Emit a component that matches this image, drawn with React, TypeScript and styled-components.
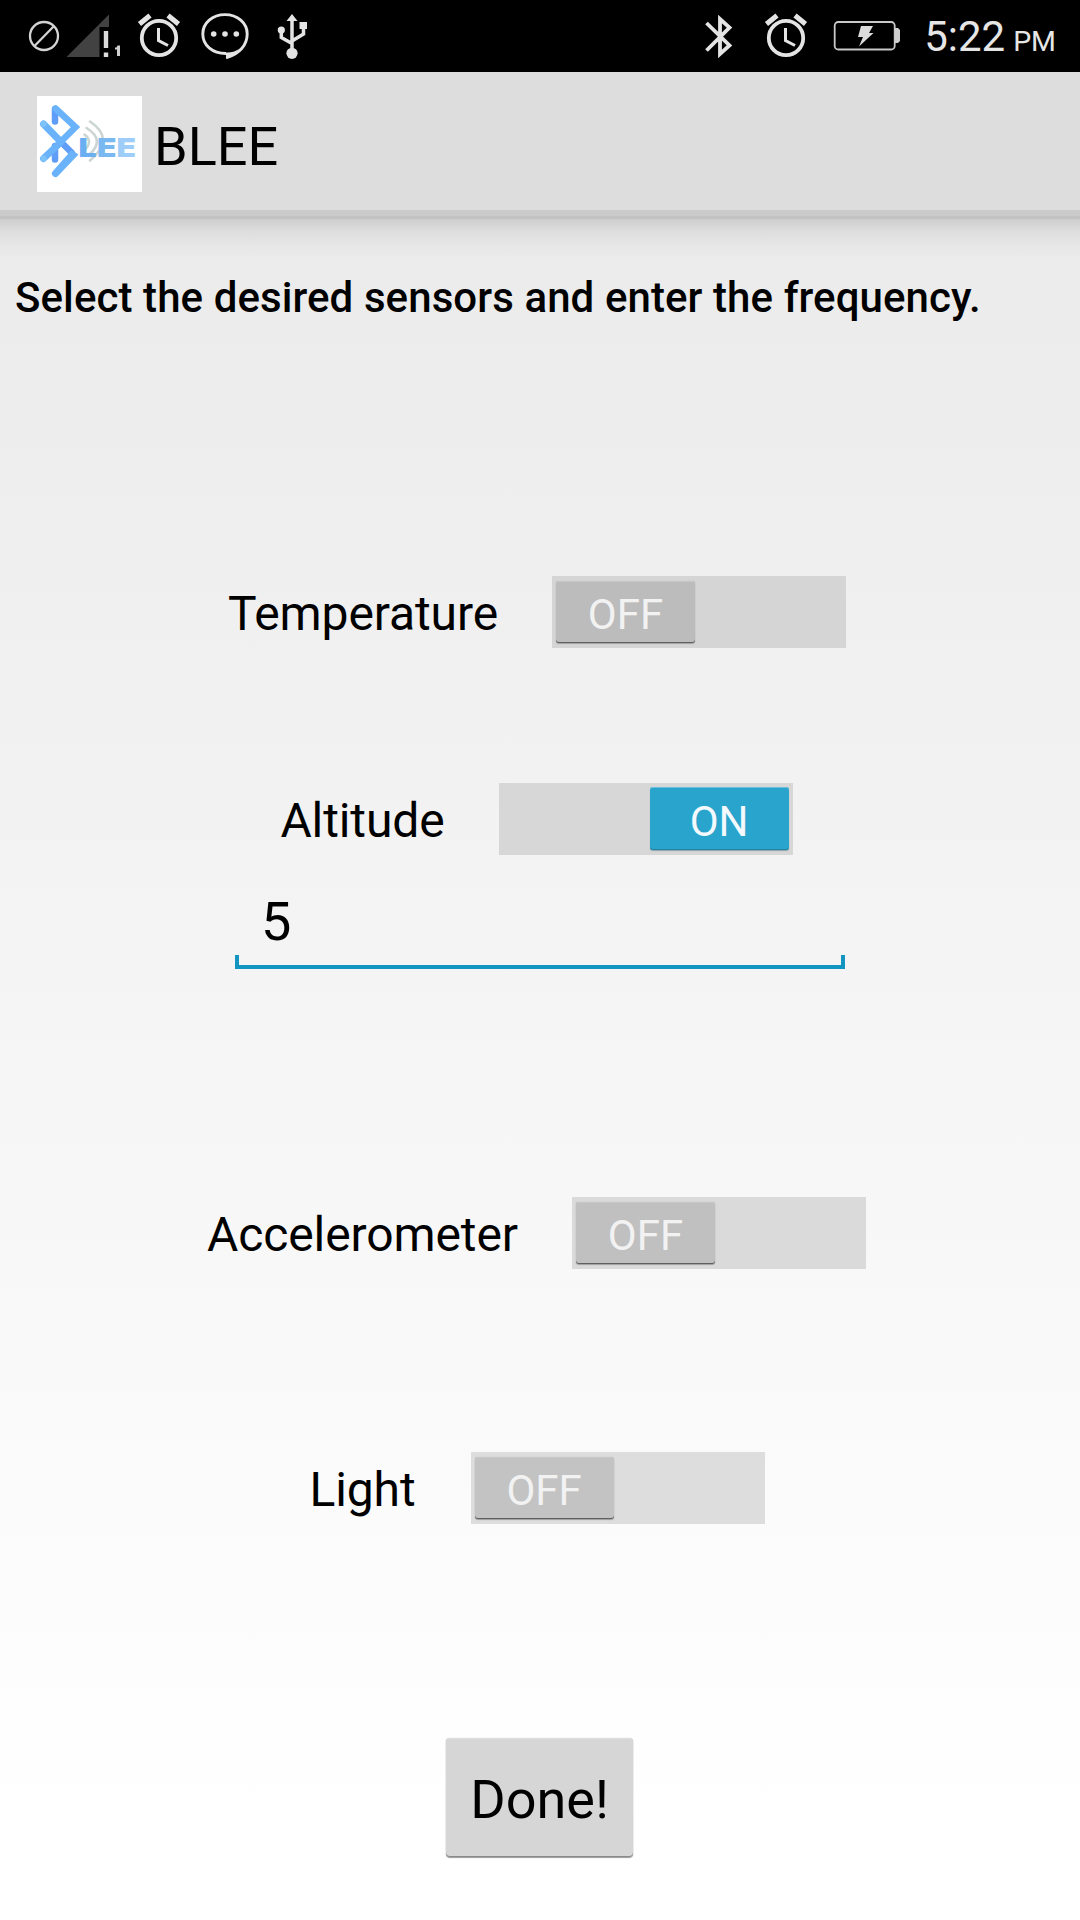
import React, { useState } from "react";
import styled, { createGlobalStyle } from "styled-components";

const GlobalStyle = createGlobalStyle`
  *, *::before, *::after { box-sizing: border-box; }
  html, body { margin: 0; padding: 0; }
  body { font-family: Roboto, "Noto Sans", sans-serif; color: #000; }
`;

const Screen = styled.div`
  width: 1080px;
  height: 1920px;
  overflow: hidden;
  display: flex;
  flex-direction: column;
  background: linear-gradient(#e9e9e9 72px, #ffffff 1820px);
`;

const StatusBar = styled.header`
  flex: none;
  height: 72px;
  background: #000;
  display: flex;
  justify-content: space-between;
`;

const StatusGroup = styled.div`
  display: flex;
  align-items: center;
`;

const Glyph = styled.svg`
  display: block;
  height: 72px;
  flex: none;
`;

const Clock = styled.div`
  display: flex;
  align-items: baseline;
  color: #e6e6e6;
  font-size: 42px;
  line-height: 72px;
  padding: 7px 24px 0 0;
`;

const Meridiem = styled.span`
  font-size: 28.5px;
  margin-left: 8px;
`;

const ActionBar = styled.div`
  flex: none;
  height: 147px;
  padding: 0 37px 9px;
  display: flex;
  align-items: center;
  background: #dddddd;
  box-shadow: inset 0 -3px #c2c2c2, inset 0 -9px #cbcbcb;
`;

const AppIcon = styled.svg`
  display: block;
  width: 105px;
  height: 96px;
  margin-top: 6px;
  background: #fff;
`;

const Title = styled.h1`
  margin: 12px 0 0 12px;
  font-size: 54px;
  font-weight: 400;
  line-height: 64px;
`;

const Content = styled.main`
  flex: 1;
  display: flex;
  flex-direction: column;
  align-items: center;
  background: linear-gradient(rgba(0, 0, 0, 0.12), rgba(0, 0, 0, 0.06) 12px, rgba(0, 0, 0, 0.02) 26px, transparent 40px);
`;

const Prompt = styled.p`
  align-self: stretch;
  margin: 54px 0 0;
  padding-left: 15px;
  font-size: 42px;
  font-weight: 500;
  line-height: 49px;
  letter-spacing: 0.085px;
  white-space: nowrap;
`;

const SensorRow = styled.label<{ $top: number; $shift: number }>`
  display: flex;
  align-items: center;
  height: 72px;
  margin-top: ${(p) => p.$top}px;
  margin-right: ${(p) => p.$shift}px;
`;

const SensorName = styled.span<{ $gap: number }>`
  font-size: 48px;
  line-height: 56px;
  letter-spacing: -0.1px;
  margin-right: ${(p) => p.$gap}px;
  padding-top: 3px;
`;

const Track = styled.button<{ $on: boolean; $tint: string }>`
  width: 294px;
  height: 72px;
  padding: 4px 4px 5px;
  border: 0;
  display: flex;
  justify-content: ${(p) => (p.$on ? "flex-end" : "flex-start")};
  background: ${(p) => p.$tint};
`;

const Thumb = styled.span<{ $on: boolean }>`
  width: 139px;
  height: ${(p) => (p.$on ? 63 : 62)}px;
  margin-top: ${(p) => (p.$on ? 0 : 1)}px;
  padding-top: ${(p) => (p.$on ? 6 : 5)}px;
  border-radius: 3px;
  display: flex;
  align-items: center;
  justify-content: center;
  font: 400 42px/48px Roboto, "Noto Sans", sans-serif;
  color: ${(p) => (p.$on ? "#f3f9fc" : "#f2f2f2")};
  background: ${(p) => (p.$on ? "#29a4cd" : "rgba(0, 0, 0, 0.118)")};
  box-shadow: ${(p) =>
    p.$on
      ? "inset 0 1px #6bbfda, inset 0 -1px #2383a3, 0 1px 1px #8fa3aa"
      : "inset 0 1px #c8c8c8, inset 0 -1px #5f5f5f, 0 1px 1px #a0a0a0, 0 0 1px #a8a8a8"};
`;

const Field = styled.div`
  width: 610px;
  height: 114px;
  display: flex;
  flex-direction: column;
  justify-content: space-between;
`;

const Frequency = styled.input`
  width: 100%;
  height: 70px;
  margin-top: 30px;
  padding: 2px 27px 0 26px;
  border: 0;
  outline: 0;
  background: transparent;
  color: #000;
  font: 400 54px/64px Roboto, "Noto Sans", sans-serif;
`;

const FieldBracket = styled.div`
  height: 14px;
  border: 4px solid #1296c1;
  border-top: 0;
`;

const DoneButton = styled.button`
  width: 187px;
  height: 119px;
  margin: 214px 1px 0 0;
  padding: 4px 0 0;
  border: 0;
  border-radius: 4px;
  background: #d6d6d6;
  color: #000;
  font: 400 54px/64px Roboto, "Noto Sans", sans-serif;
  box-shadow: inset 0 1px #dedede, inset 0 -1px #8a8a8a, 0 1px 1px #9a9a9a, 0 0 1px #b0b0b0;
`;

const LIGHT = "#e4e4e4";

function AlarmGlyph({ gap }: { gap: number }) {
  return (
    <Glyph width={gap} viewBox={`0 0 ${gap} 72`} fill="none" stroke={LIGHT}>
      <circle cx="24" cy="38" r="17.2" strokeWidth="3.8" />
      <path d="M23.500 28v12.500l9.500 5" strokeWidth="3" />
      <path d="M4.500 24l10.500-8.500M43.500 24L33 15.500" strokeWidth="5" />
    </Glyph>
  );
}

function StatusIcons() {
  return (
    <StatusGroup>
      <Glyph width="64" viewBox="0 0 64 72" fill="none" stroke="#d4d4d4" strokeWidth="2.300">
        <circle cx="44" cy="36" r="14" />
        <path d="M34.500 46L53.500 26.500" />
      </Glyph>
      <Glyph width="71" viewBox="64 0 71 72">
        <path d="M66.500 57L109 14.500V27H99.500V57Z" fill="#424242" />
        <path d="M103.800 31h4.400v17h-4.400zM103.800 52.500h4.400v4.500h-4.400z" fill="#dcdcdc" />
        <path d="M115 47.500h1.500l1-2h2.500v10.500h-3v-6.500h-2z" fill="#cfcfcf" />
      </Glyph>
      <AlarmGlyph gap={62} />
      <Glyph width="75" viewBox="197 0 75 72" fill={LIGHT}>
        <path d="M226 53.500C212 53.500 202.800 45 202.800 34S212.500 14.600 225 14.600S247.200 23 247.200 34C247.200 45.500 239 53.500 228 57V53.500" fill="none" stroke={LIGHT} strokeWidth="2.900" />
        <path d="M226 52.500Q233 53 239 49Q234 56 226 59Z" />
        <circle cx="213.700" cy="34" r="2.800" />
        <circle cx="225" cy="34" r="2.800" />
        <circle cx="236.300" cy="34" r="2.800" />
      </Glyph>
      <Glyph width="48" viewBox="272 0 48 72" fill={LIGHT}>
        <path d="M292 14l5.500 7h-11zM299.500 22h7.500v7h-7.500z" />
        <circle cx="281.300" cy="30" r="3.600" />
        <circle cx="292" cy="53.300" r="5.600" />
        <path d="M292 19v34M281.300 31v6.500l10.700 6M303.500 28v6l-11.500 7" fill="none" stroke={LIGHT} strokeWidth="3.500" />
      </Glyph>
    </StatusGroup>
  );
}

function SystemIcons() {
  return (
    <StatusGroup>
      <Glyph width="61" viewBox="701.500 0 61 72" fill="none" stroke={LIGHT}>
        <path d="M707 23L730 45.500L720.500 54V19L730 27.500L707 50.500" strokeWidth="3.800" />
      </Glyph>
      <AlarmGlyph gap={67} />
      <Glyph width="95" viewBox="829 0 95 72">
        <rect x="834.700" y="22" width="60" height="27.500" rx="3.500" fill="none" stroke="#c8c8c8" strokeWidth="1.800" />
        <path d="M895 28h3l2 2v11l-2 2h-3z" fill="#cfcfcf" />
        <path d="M861 26h12l-4 7h4.500L859 46.500l4-9.500h-5z" fill="#dcdcdc" />
      </Glyph>
      <Clock>
        5:22<Meridiem>PM</Meridiem>
      </Clock>
    </StatusGroup>
  );
}

const LogoText = styled.text`
  font-family: Inter, Roboto, sans-serif;
  font-weight: 900;
  font-size: 26px;
`;

function Logo() {
  return (
    <AppIcon viewBox="0 0 105 96" strokeLinecap="round" fill="none">
      <g stroke="#cbd5d3" strokeWidth="2.600">
        <path d="M47.500 38.500Q56 45 48.500 53" />
        <path d="M49.500 32Q69 44 52 59" />
        <path d="M53 25.500Q79 43 53 64.500" />
      </g>
      <path d="M18 13v12.500M18 50v13.500M24 46L35 57" stroke="#5f9df8" strokeWidth="6.500" />
      <path d="M6.500 28L24 46M6.500 62.500L24 46" stroke="#6ab3fb" strokeWidth="7" />
      <path d="M18.500 12.500L38.500 31L22 47.500" stroke="#6ab3fb" strokeWidth="6.500" strokeLinejoin="miter" />
      <path d="M34.500 54L41.500 58.500L21 80A3.500 3.500 0 0 1 16 75Z" fill="#6ab3fb" />
      <circle cx="6.500" cy="28" r="3" fill="#7ec3f6" />
      <circle cx="6.500" cy="62.500" r="3" fill="#7ec3f6" />
      <LogoText x="41.500" y="61" textLength="18" lengthAdjust="spacingAndGlyphs" fill="#69aff2">L</LogoText>
      <LogoText x="60" y="61" textLength="19.500" lengthAdjust="spacingAndGlyphs" fill="#7ab8f1">E</LogoText>
      <LogoText x="79.500" y="61" textLength="19.500" lengthAdjust="spacingAndGlyphs" fill="#9dcdf8">E</LogoText>
    </AppIcon>
  );
}

interface SensorProps {
  name: string;
  initial?: boolean;
  top: number;
  shift: number;
  gap?: number;
  tint: string;
}

function Sensor({ name, initial = false, top, shift, gap = 54, tint }: SensorProps) {
  const [on, setOn] = useState(initial);
  return (
    <SensorRow $top={top} $shift={shift}>
      <SensorName $gap={gap}>{name}</SensorName>
      <Track type="button" role="switch" aria-checked={on} $on={on} $tint={tint} onClick={() => setOn(!on)}>
        <Thumb $on={on}>{on ? "ON" : "OFF"}</Thumb>
      </Track>
    </SensorRow>
  );
}

export default function App() {
  const [frequency, setFrequency] = useState("5");
  return (
    <Screen>
      <GlobalStyle />
      <StatusBar>
        <StatusIcons />
        <SystemIcons />
      </StatusBar>
      <ActionBar>
        <Logo />
        <Title>BLEE</Title>
      </ActionBar>
      <Content>
        <Prompt>Select the desired sensors and enter the frequency.</Prompt>
        <Sensor name="Temperature" top={254} shift={6} tint="#d5d5d5" />
        <Sensor name="Altitude" initial top={135} shift={7} tint="#d7d7d7" />
        <Field>
          <Frequency value={frequency} onChange={(e) => setFrequency(e.target.value)} />
          <FieldBracket />
        </Field>
        <Sensor name="Accelerometer" top={228} shift={7} tint="#dadada" />
        <Sensor name="Light" top={183} shift={6} gap={55} tint="#dddddd" />
        <DoneButton type="button">Done!</DoneButton>
      </Content>
    </Screen>
  );
}
